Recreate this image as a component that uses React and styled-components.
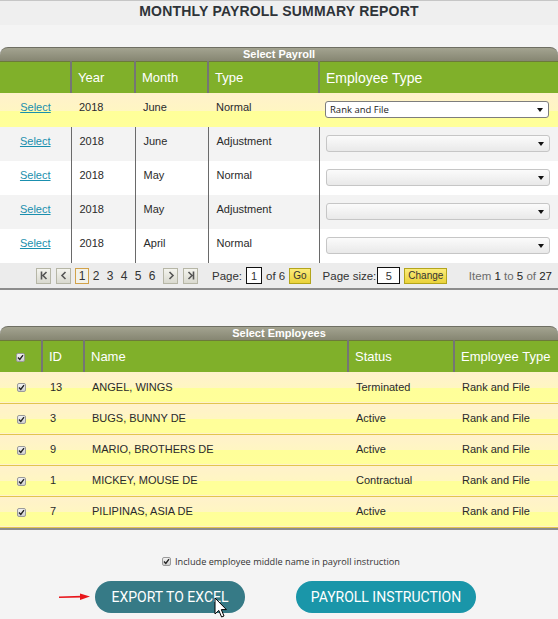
import React from 'react'
import styled, { createGlobalStyle, css } from 'styled-components'

const GlobalStyle = createGlobalStyle`
  html, body {
    margin: 0;
    padding: 0;
    background: #f4f4f4;
    font-family: "Liberation Sans", Arial, sans-serif;
  }
`

const Page = styled.div`
  width: 558px;
  min-height: 619px;
  background: #f4f4f4;
`

const TitleBar = styled.div`
  height: 24px;
  border-top: 1px solid #c6c6c6;
  background: #efefef;
  display: flex;
  justify-content: center;
  align-items: flex-start;

  h1 {
    margin: 2px 0 0;
    font-size: 14px;
    font-weight: bold;
    color: #2e3338;
    letter-spacing: 0.2px;
  }
`

const Grid = styled.section`
  margin-top: ${p => p.$top}px;
`

const Caption = styled.div`
  height: 13px;
  line-height: 13px;
  border-top: 1px solid #6e6e62;
  border-radius: 8px 8px 0 0;
  background: linear-gradient(#a3a390, #868672);
  color: #fff;
  font-size: 11px;
  font-weight: bold;
  text-align: center;
`

const Table = styled.table`
  width: 558px;
  table-layout: fixed;
  border-collapse: collapse;
  border-spacing: 0;
`

const Th = styled.th`
  height: ${p => p.$h}px;
  padding: 0 0 0 6px;
  background: #80b02a;
  color: #fff;
  font-weight: normal;
  font-size: ${p => p.$big ? 14 : 13}px;
  text-align: ${p => p.$center ? 'center' : 'left'};
  border-left: ${p => p.$first ? 'none' : '2px solid #757575'};
  border-top: 1px solid #6c7a3a;
  ${p => p.$center && css`padding: 0;`}
`

const selectedBg = css`
  background: linear-gradient(#fff1cc 0%, #fff6c2 52%, #ffff99 52%, #ffff9a 100%);
`

const Tr = styled.tr`
  ${p => p.$selected
    ? selectedBg
    : css`background: ${p.$alt ? '#f3f3f3' : '#ffffff'};`}
  ${p => p.$line && css`border-bottom: 1px solid #e2c54e;`}
`

const Td = styled.td`
  height: ${p => p.$h}px;
  box-sizing: border-box;
  padding: ${p => p.$top ?? 0}px 0 0 ${p => p.$pad ?? 8}px;
  font-size: 11px;
  line-height: 13px;
  color: #2a2a2a;
  text-align: ${p => p.$center ? 'center' : 'left'};
  vertical-align: ${p => p.$top != null ? 'top' : 'middle'};
  border-left: ${p => p.$rule ? '1px solid #6a6a6a' : 'none'};
  ${p => p.$center && css`padding-left: 0;`}
  white-space: nowrap;
`

const SelectLink = styled.a`
  color: #1a8fae;
  text-decoration: underline;
  font-size: 11px;
  cursor: pointer;
`

const DropBox = styled.div`
  width: 224px;
  height: 17px;
  margin-left: -1px;
  box-sizing: border-box;
  border: 1px solid ${p => p.$active ? '#7d7d7d' : '#c6c6c6'};
  border-radius: 3px;
  background: ${p => p.$active ? '#ffffff' : 'linear-gradient(#fbfbfb, #e9e9e9)'};
  display: flex;
  align-items: center;
  padding: 0 5px 0 4px;
  font-family: "Open Sans", "DejaVu Sans", sans-serif;
  font-size: 9.5px;
  line-height: 12px;
  color: #222;

  &::after {
    content: '';
    margin-left: auto;
    border-left: 3.5px solid transparent;
    border-right: 3.5px solid transparent;
    border-top: 4px solid #111;
  }
`

const Pager = styled.div`
  height: 25px;
  background: #ececec;
  border-bottom: 2px solid #8c8c8c;
  display: flex;
  align-items: center;
  padding: 0 6px 0 36px;
  font-size: 11px;
  color: #333;
  white-space: nowrap;

  & > * {
    flex-shrink: 0;
  }
`

const PageBtn = styled.span`
  width: 15px;
  height: 16px;
  box-sizing: border-box;
  border: 1px solid #b6b6a6;
  background: linear-gradient(#f4f4ee, #d9d9cf);
  display: inline-flex;
  align-items: center;
  justify-content: center;
  margin-left: ${p => p.$ml ?? 0}px;
  margin-right: ${p => p.$mr ?? 0}px;
`

const PageNum = styled.span`
  width: 14px;
  height: 16px;
  box-sizing: border-box;
  display: inline-flex;
  align-items: center;
  justify-content: center;
  font-size: 12px;
  color: #333;
  ${p => p.$current && css`
    border: 1px solid #d2a24a;
    background: #f2f2ea;
  `}
`

const PagerLabel = styled.span`
  margin-left: ${p => p.$ml}px;
  font-size: 11.5px;
  color: ${p => p.$muted ? '#6b6b6b' : '#333'};

  b {
    font-weight: normal;
    color: #222;
  }
`

const ItemCount = styled(PagerLabel)`
  margin-left: auto;
`

const PageInput = styled.span`
  width: ${p => p.$w}px;
  height: 17px;
  box-sizing: border-box;
  border: 1px solid #111;
  background: #fff;
  display: inline-flex;
  align-items: flex-end;
  justify-content: center;
  margin-left: ${p => p.$ml}px;
  font-size: 11px;
  line-height: 14px;
`

const YellowBtn = styled.span`
  height: 16px;
  box-sizing: border-box;
  padding: 0 ${p => p.$px}px;
  margin-left: ${p => p.$ml}px;
  border: 1px solid #b3a51c;
  background: linear-gradient(#fbeb7a, #ead23a);
  display: inline-flex;
  align-items: center;
  font-size: 10px;
  color: #333;
`

const CheckBox = styled.span`
  width: 9px;
  height: 9px;
  box-sizing: border-box;
  border: 1px solid #9a9a9a;
  border-radius: 2px;
  background: linear-gradient(#f2f2f2, #cfcfcf);
  display: inline-flex;
  align-items: center;
  justify-content: center;
  vertical-align: middle;
`

const OptionLine = styled.div`
  margin-top: 25px;
  display: flex;
  justify-content: center;
  align-items: center;
  gap: 4px;
  padding-left: 4px;
  font-family: "Open Sans", "DejaVu Sans", sans-serif;
  font-size: 9.2px;
  color: #333;
`

const ButtonRow = styled.div`
  margin-top: 13px;
  display: flex;
  align-items: center;
  padding-left: 58px;
`

const PillButton = styled.button`
  position: relative;
  width: ${p => p.$w}px;
  height: 32px;
  margin-left: ${p => p.$ml}px;
  border: none;
  border-radius: 16px;
  background: ${p => p.$hover ? '#367a86' : '#1a96a9'};
  color: #fff;
  font-family: Roboto, "Liberation Sans", sans-serif;
  font-size: 14px;
  text-transform: uppercase;
  cursor: pointer;
`

const Pointer = styled.svg`
  position: absolute;
  left: 119px;
  top: 16px;
`

const Check = () => (
  <svg width="7" height="7" viewBox="0 0 7 7">
    <path d="M1 3.6 L2.8 5.4 L6 1.2" fill="none" stroke="#222" strokeWidth="1.4" />
  </svg>
)

const NavIcon = ({ d }) => (
  <svg width="8" height="9" viewBox="0 0 8 9">
    <path d={d} fill="none" stroke="#555" strokeWidth="1.6" />
  </svg>
)

const payrolls = [
  { year: 2018, month: 'June', type: 'Normal', emp: 'Rank and File', selected: true },
  { year: 2018, month: 'June', type: 'Adjustment', emp: '' },
  { year: 2018, month: 'May', type: 'Normal', emp: '' },
  { year: 2018, month: 'May', type: 'Adjustment', emp: '' },
  { year: 2018, month: 'April', type: 'Normal', emp: '' },
]

const employees = [
  { id: 13, name: 'ANGEL, WINGS', status: 'Terminated' },
  { id: 3, name: 'BUGS, BUNNY DE', status: 'Active' },
  { id: 9, name: 'MARIO, BROTHERS DE', status: 'Active' },
  { id: 1, name: 'MICKEY, MOUSE DE', status: 'Contractual' },
  { id: 7, name: 'PILIPINAS, ASIA DE', status: 'Active' },
]

const App = () => {
  return (
    <Page>
      <GlobalStyle />
      <TitleBar><h1>MONTHLY PAYROLL SUMMARY REPORT</h1></TitleBar>

      <Grid $top={22}>
        <Caption>Select Payroll</Caption>
        <Table>
          <colgroup>
            <col style={{ width: 71 }} />
            <col style={{ width: 64 }} />
            <col style={{ width: 73 }} />
            <col style={{ width: 111 }} />
            <col style={{ width: 239 }} />
          </colgroup>
          <thead>
            <tr>
              <Th $h={31} $first />
              <Th $h={31}>Year</Th>
              <Th $h={31}>Month</Th>
              <Th $h={31}>Type</Th>
              <Th $h={31} $big>Employee Type</Th>
            </tr>
          </thead>
          <tbody>
            {payrolls.map((r, i) => (
              <Tr key={i} $selected={r.selected} $alt={i % 2 === 1}>
                <Td $h={34} $top={8} $center><SelectLink>Select</SelectLink></Td>
                <Td $h={34} $top={8} $rule={!r.selected}>{r.year}</Td>
                <Td $h={34} $top={8} $rule={!r.selected}>{r.month}</Td>
                <Td $h={34} $top={8} $rule={!r.selected}>{r.type}</Td>
                <Td $h={34} $top={8} $rule={!r.selected} $pad={7}>
                  <DropBox $active={r.selected}>{r.emp}</DropBox>
                </Td>
              </Tr>
            ))}
          </tbody>
        </Table>
        <Pager>
          <PageBtn $mr={5}><NavIcon d="M1.5 0.5 V8.5 M6.5 1 L3 4.5 L6.5 8" /></PageBtn>
          <PageBtn $mr={4}><NavIcon d="M5.5 1 L2 4.5 L5.5 8" /></PageBtn>
          <PageNum $current>1</PageNum>
          <PageNum>2</PageNum>
          <PageNum>3</PageNum>
          <PageNum>4</PageNum>
          <PageNum>5</PageNum>
          <PageNum>6</PageNum>
          <PageBtn $ml={4} $mr={5}><NavIcon d="M2.5 1 L6 4.5 L2.5 8" /></PageBtn>
          <PageBtn><NavIcon d="M6.5 0.5 V8.5 M1.5 1 L5 4.5 L1.5 8" /></PageBtn>
          <PagerLabel $ml={14}>Page:</PagerLabel>
          <PageInput $w={16} $ml={4}>1</PageInput>
          <PagerLabel $ml={4}>of 6</PagerLabel>
          <YellowBtn $ml={4} $px={3}>Go</YellowBtn>
          <PagerLabel $ml={12}>Page size:</PagerLabel>
          <PageInput $w={23} $ml={1}>5</PageInput>
          <YellowBtn $ml={4} $px={3}>Change</YellowBtn>
          <ItemCount $muted>Item <b>1</b> to <b>5</b> of <b>27</b></ItemCount>
        </Pager>
      </Grid>

      <Grid $top={36}>
        <Caption>Select Employees</Caption>
        <Table>
          <colgroup>
            <col style={{ width: 42 }} />
            <col style={{ width: 42 }} />
            <col style={{ width: 264 }} />
            <col style={{ width: 106 }} />
            <col style={{ width: 104 }} />
          </colgroup>
          <thead>
            <tr>
              <Th $h={31} $first $center><CheckBox><Check /></CheckBox></Th>
              <Th $h={31}>ID</Th>
              <Th $h={31}>Name</Th>
              <Th $h={31}>Status</Th>
              <Th $h={31}>Employee Type</Th>
            </tr>
          </thead>
          <tbody>
            {employees.map(e => (
              <Tr key={e.id} $selected $line>
                <Td $h={31} $center><CheckBox><Check /></CheckBox></Td>
                <Td $h={31}>{e.id}</Td>
                <Td $h={31}>{e.name}</Td>
                <Td $h={31}>{e.status}</Td>
                <Td $h={31}>Rank and File</Td>
              </Tr>
            ))}
          </tbody>
        </Table>
        <div style={{ borderTop: '2px solid #8c8c8c' }} />
      </Grid>

      <OptionLine>
        <CheckBox><Check /></CheckBox>
        <span>Include employee middle name in payroll instruction</span>
      </OptionLine>

      <ButtonRow>
        <svg width="32" height="8" viewBox="0 0 32 8">
          <path d="M1 4.2 L24 3.6" stroke="#e8161b" strokeWidth="1.6" />
          <path d="M22 0.5 L32 3.6 L22 7 Z" fill="#e8161b" />
        </svg>
        <PillButton $w={150} $ml={5} $hover>
          Export to Excel
          <Pointer width="14" height="22" viewBox="0 0 14 22">
            <path d="M1 1 L1 17 L4.8 13.4 L7.6 20 L10 19 L7.3 12.6 L12.4 12.6 Z" fill="#fff" stroke="#000" strokeWidth="1" strokeLinejoin="round" />
          </Pointer>
        </PillButton>
        <PillButton $w={180} $ml={51}>Payroll Instruction</PillButton>
      </ButtonRow>
    </Page>
  )
}

export default App
